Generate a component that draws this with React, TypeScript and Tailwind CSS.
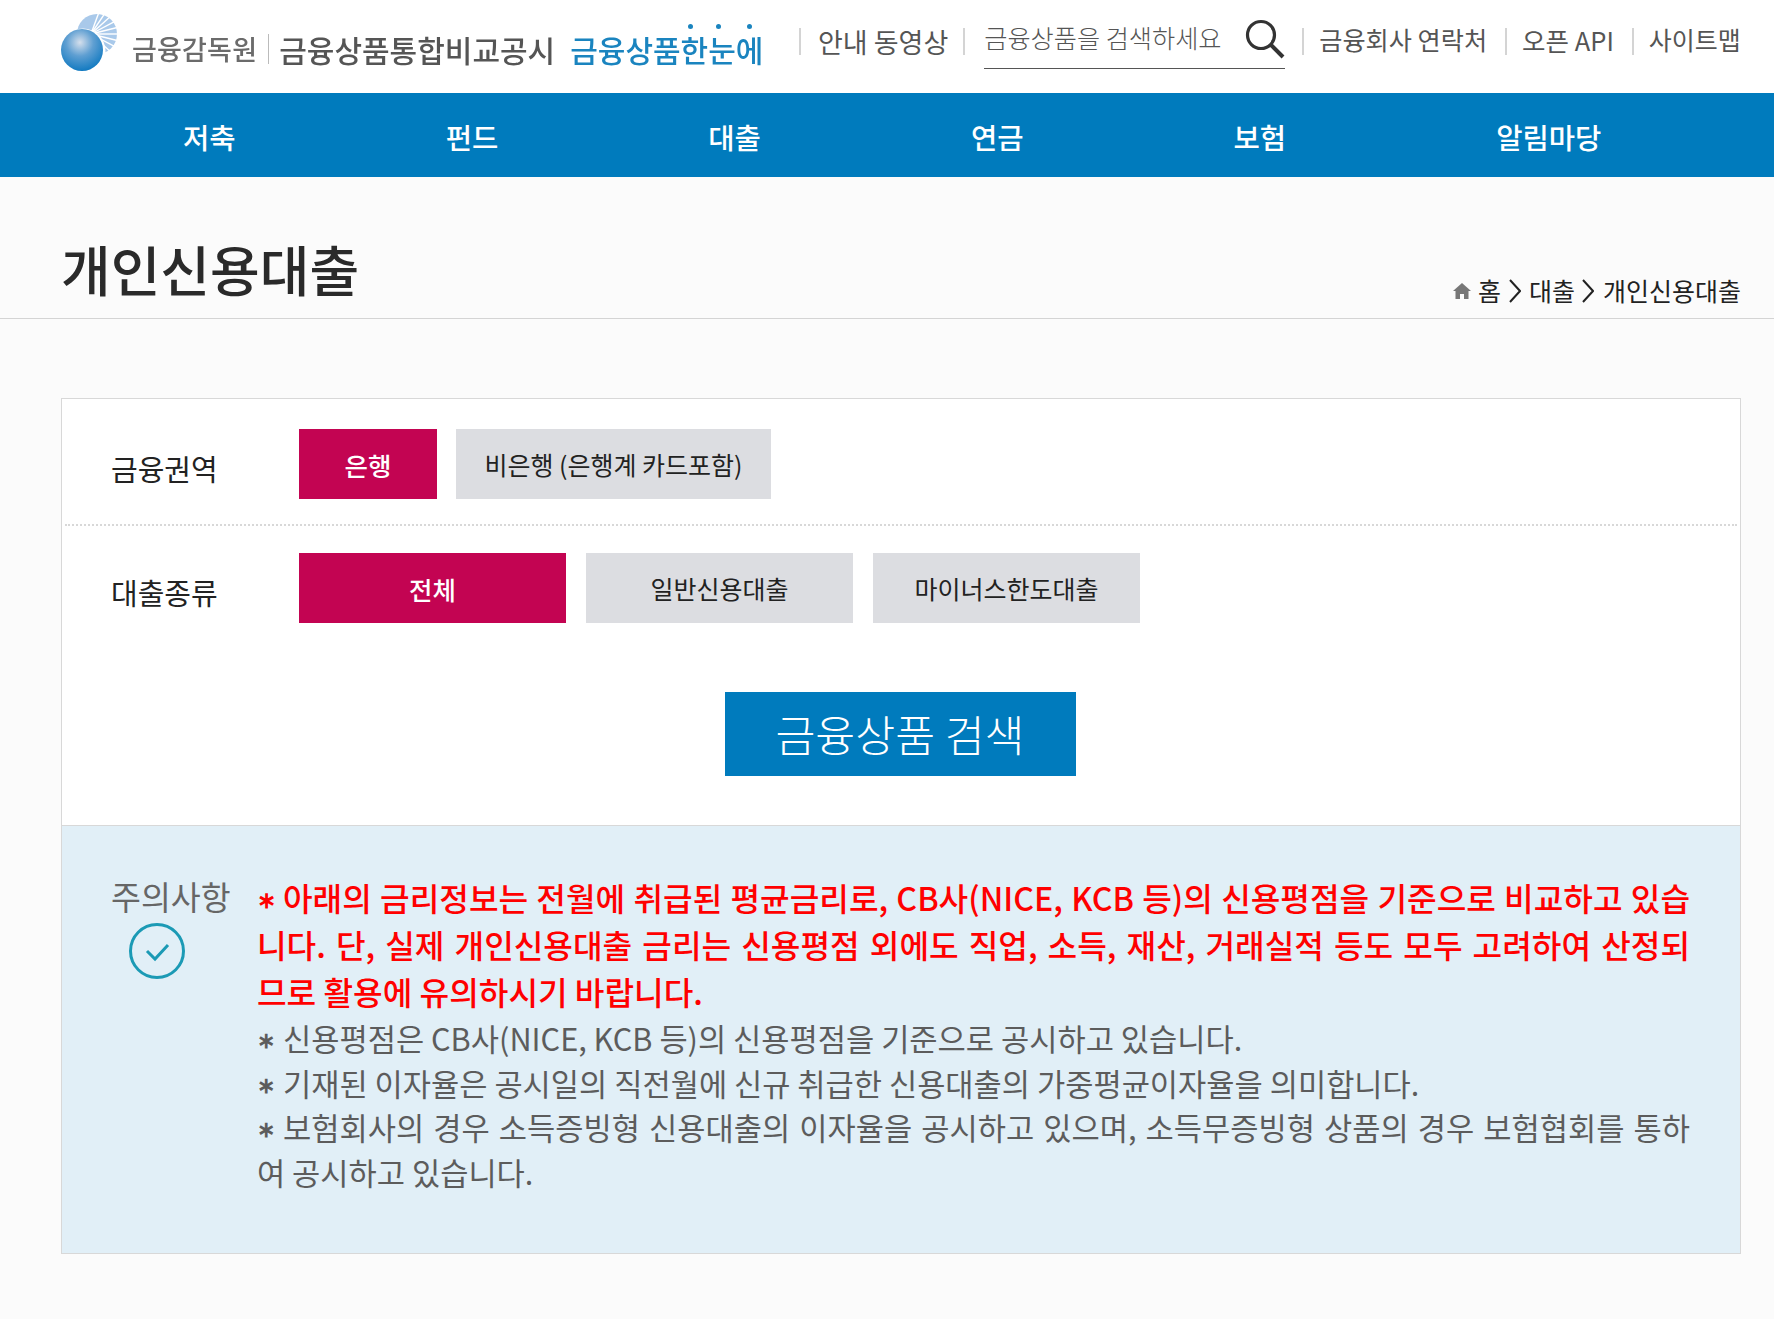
const font = '[font-family:"Noto_Sans_CJK_KR","Noto_Sans",sans-serif]';
const navItems = ['저축', '펀드', '대출', '연금', '보험', '알림마당'];

function Sep({ className = '' }: { className?: string }) {
  return <span className={`block w-[2px] h-[27px] bg-[#d4d4d4] shrink-0 ${className}`} />;
}

function Logo() {
  const rays = Array.from({ length: 16 }, (_, i) => -70 + i * 14);
  return (
    <svg width="60" height="62" viewBox="0 0 60 62" className="shrink-0 mt-[-8px]">
      <defs>
        <radialGradient id="ball" cx="0.45" cy="0.32" r="0.72">
          <stop offset="0" stopColor="#d5dfec" />
          <stop offset="0.45" stopColor="#5f9fd2" />
          <stop offset="1" stopColor="#0a76bf" />
        </radialGradient>
      </defs>
      <circle cx="36" cy="22" r="20" fill="#a9c9ea" />
      {rays.map((a) => (
        <line
          key={a}
          x1="30"
          y1="22"
          x2={30 + 26 * Math.cos((a * Math.PI) / 180)}
          y2={22 + 26 * Math.sin((a * Math.PI) / 180)}
          stroke="#fff"
          strokeWidth="1.4"
        />
      ))}
      <circle cx="22" cy="39" r="22.5" fill="#fff" />
      <circle cx="21" cy="38" r="21" fill="url(#ball)" />
    </svg>
  );
}

function Chevron({ className = '' }: { className?: string }) {
  return (
    <svg width="12" height="24" viewBox="0 0 12 24" className={`shrink-0 ${className}`}>
      <polyline points="1,1 11,12 1,23" fill="none" stroke="#222" strokeWidth="2" />
    </svg>
  );
}

function Option({ label, active, className }: { label: string; active?: boolean; className: string }) {
  return (
    <button
      className={`h-[70px] pt-[2px] flex items-center justify-center ${className} ${
        active ? 'bg-[#c30452] text-white font-medium text-[25.5px]' : 'bg-[#dcdde1] text-[#222] text-[25px]'
      }`}
    >
      {label}
    </button>
  );
}

// the asterisk sits mid-height and heavier than a normal one in the original
function Star() {
  return (
    <span className="inline-block w-[26px] text-[0.72em] font-bold leading-none [vertical-align:3px]">∗</span>
  );
}

export default function App() {
  return (
    <div className={`${font} min-h-[1319px] bg-[#fbfbfb] text-[#222]`}>
      {/* Top bar */}
      <header className="h-[93px] bg-white flex items-center pl-[61px]">
        <div className="flex items-center w-[738px] shrink-0 pt-[1px]">
          <Logo />
          <span className="ml-[11px] text-[27px] font-medium text-[#6b6b6b] leading-none pt-[3px] tracking-[0.2px] blur-[0.4px]">금융감독원</span>
          <span className="ml-[11px] mt-[4px] w-[1px] h-[30px] bg-[#bbb]" />
          <span className="ml-[10px] text-[30px] font-medium text-[#555] leading-none pt-[3px] blur-[0.4px]">금융상품통합비교공시</span>
          <span className="relative ml-[15px] text-[30px] font-medium text-[#1a84bf] leading-none pt-[3px] blur-[0.4px]">
            금융상품한눈에
            <span className="absolute left-[118px] top-[-7px] w-[5px] h-[5px] rounded-full bg-[#1a84bf]" />
            <span className="absolute left-[146px] top-[-7px] w-[5px] h-[5px] rounded-full bg-[#1a84bf]" />
            <span className="absolute left-[177px] top-[-7px] w-[5px] h-[5px] rounded-full bg-[#1a84bf]" />
          </span>
        </div>
        <nav className="flex items-center pb-[11px] text-[#555]">
          <Sep />
          <span className="ml-[17px] text-[27px] leading-none">안내 동영상</span>
          <Sep className="ml-[15px]" />
          <div className="ml-[19px] w-[301px] h-[50px] border-b border-[#555] flex items-start justify-between mt-[6px]">
            <span className="text-[25.2px] font-light leading-none pt-[6px]">금융상품을 검색하세요</span>
            <svg width="40" height="40" viewBox="0 0 40 40">
              <circle cx="16" cy="16" r="13.5" fill="none" stroke="#333" strokeWidth="3.2" />
              <line x1="26" y1="26" x2="38" y2="38" stroke="#333" strokeWidth="4" />
            </svg>
          </div>
          <Sep className="ml-[17px]" />
          <span className="ml-[15px] text-[25.2px] leading-none pb-[3px]">금융회사 연락처</span>
          <Sep className="ml-[18px]" />
          <span className="ml-[15px] text-[25.5px] leading-none pb-[3px]">오픈 API</span>
          <Sep className="ml-[18px]" />
          <span className="ml-[15px] text-[25px] leading-none pb-[3px]">사이트맵</span>
        </nav>
      </header>

      {/* Main nav */}
      <div className="h-[84px] bg-[#007bbd] flex items-center pl-[78px] pt-[4px]">
        {navItems.map((item) => (
          <a key={item} className="px-[105px] text-[28.6px] font-medium text-white leading-none">
            {item}
          </a>
        ))}
      </div>

      {/* Page title */}
      <div className="h-[142px] border-b border-[#d4d4d4] pl-[61px] pr-[33px] flex items-end justify-between">
        <h1 className="text-[54px] font-medium leading-none pb-[22px] text-[#2a2a2a]">개인신용대출</h1>
        <div className="flex items-center text-[25px] leading-none pb-[15px]">
          <svg width="18" height="16" viewBox="0 0 18 16" className="mr-[7px]">
            <path d="M9 0 L18 8 L15.5 8 L15.5 16 L11 16 L11 11 L7 11 L7 16 L2.5 16 L2.5 8 L0 8 Z" fill="#777" />
          </svg>
          <span>홈</span>
          <Chevron className="ml-[8px] mr-[8px]" />
          <span>대출</span>
          <Chevron className="ml-[7px] mr-[9px]" />
          <span>개인신용대출</span>
        </div>
      </div>

      {/* Search card */}
      <section className="mt-[79px] ml-[61px] w-[1680px] border border-[#d8d8d8] bg-white">
        <div className="pt-[30px]">
          <div className="flex items-center pl-[49px]">
            <span className="w-[188px] text-[29px] leading-none pt-[8px]">금융권역</span>
            <div className="flex gap-[19px]">
              <Option label="은행" active className="w-[138px]" />
              <Option label="비은행 (은행계 카드포함)" className="w-[315px]" />
            </div>
          </div>
          <div className="mx-[3px] mt-[25px] border-t-2 border-dotted border-[#d8d8d8]" />
          <div className="flex items-center pl-[49px] mt-[27px]">
            <span className="w-[188px] text-[29px] leading-none pt-[8px]">대출종류</span>
            <div className="flex gap-[20px]">
              <Option label="전체" active className="w-[267px]" />
              <Option label="일반신용대출" className="w-[267px]" />
              <Option label="마이너스한도대출" className="w-[267px]" />
            </div>
          </div>
          <div className="flex justify-center mt-[69px] pr-[2px]">
            <button className="w-[351px] h-[84px] bg-[#007bbd] text-white text-[43.4px] font-light">금융상품 검색</button>
          </div>
        </div>

        {/* Notice */}
        <div className="mt-[49px] h-[428px] bg-[#e1eff7] border-t border-[#d8d8d8] flex">
          <div className="w-[195px] pl-[49px] pt-[54px] shrink-0 flex flex-col items-start">
            <span className="text-[32.5px] leading-none text-[#666]">주의사항</span>
            <svg width="58" height="58" viewBox="0 0 58 58" className="mt-[9px] ml-[17px]">
              <circle cx="29" cy="29" r="26.5" fill="none" stroke="#1b9ab5" strokeWidth="3" />
              <polyline points="19,29 27,37 40,23" fill="none" stroke="#1b9ab5" strokeWidth="3" />
            </svg>
          </div>
          <div className="w-[1433px] pt-[48px] text-justify">
            <p className="text-[32.2px] font-medium leading-[47px] text-[#ff0000]">
              <Star />아래의 금리정보는 전월에 취급된 평균금리로, CB사(NICE, KCB 등)의 신용평점을 기준으로 비교하고 있습니다. 단, 실제 개인신용대출 금리는 신용평점 외에도 직업, 소득, 재산, 거래실적 등도 모두 고려하여 산정되<span className="whitespace-nowrap">므로</span> 활용에 유의하시기 바랍니다.
            </p>
            <div className="mt-[1px] text-[30.7px] leading-[44.7px] text-[#5c5c5c]">
              <p><Star />신용평점은 CB사(NICE, KCB 등)의 신용평점을 기준으로 공시하고 있습니다.</p>
              <p><Star />기재된 이자율은 공시일의 직전월에 신규 취급한 신용대출의 가중평균이자율을 의미합니다.</p>
              <p><Star />보험회사의 경우 소득증빙형 신용대출의 이자율을 공시하고 있으며, 소득무증빙형 상품의 경우 보험협회를 통하여 공시하고 있습니다.</p>
            </div>
          </div>
        </div>
      </section>
    </div>
  );
}
